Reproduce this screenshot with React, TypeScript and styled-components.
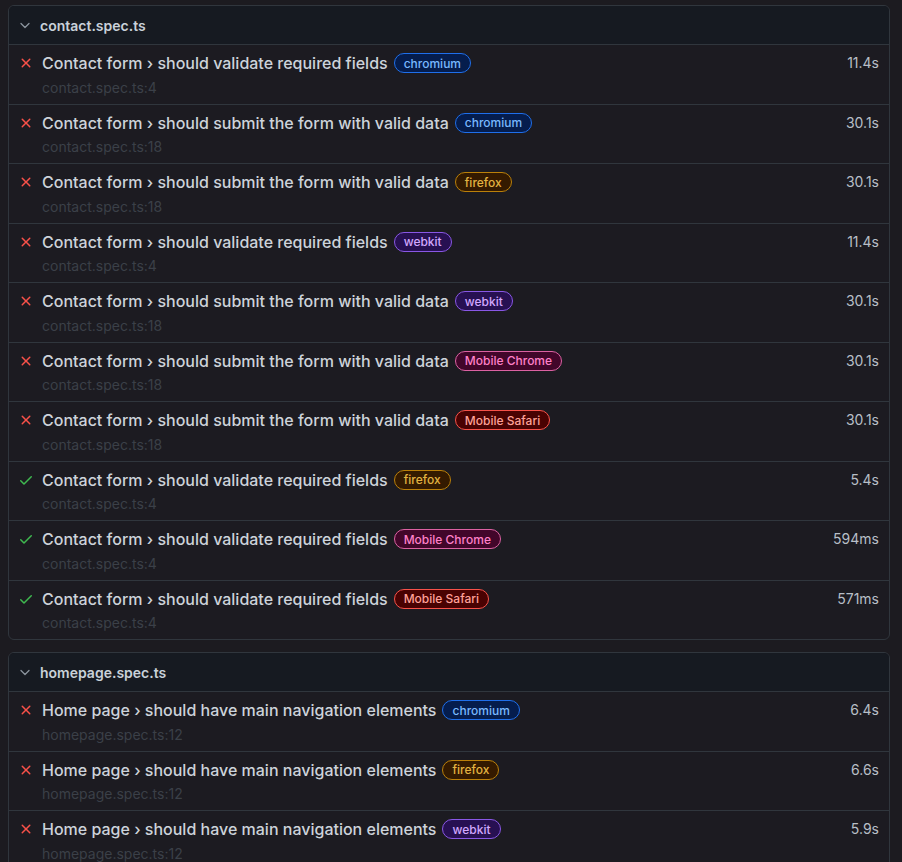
import React from "react";
import styled, { createGlobalStyle } from "styled-components";

const Global = createGlobalStyle`
  html, body { margin: 0; padding: 0; background: #1c1b20; }
  body { font-family: Inter, "Noto Sans", "Liberation Sans", sans-serif; color: #c9d1d9; }
`;

const Page = styled.div`
  padding: 5px 12px 20px 8px;
  display: flex;
  flex-direction: column;
  gap: 12px;
`;

const Card = styled.section`
  border: 1px solid #30363d;
  border-radius: 6px;
  overflow: hidden;
  background: #1c1b21;
`;

const Header = styled.header`
  height: 38px;
  display: flex;
  align-items: center;
  gap: 7px;
  padding-left: 8px;
  background: #161a21;
  font-size: 14px;
  font-weight: 600;
  color: #c9d1d9;
`;

const Row = styled.div`
  display: flex;
  align-items: flex-start;
  padding: 6px 10px 6px 9px;
  border-top: 1px solid #30363d;
`;

const IconBox = styled.span`
  width: 16px;
  height: 24px;
  display: flex;
  align-items: center;
  justify-content: center;
  margin-right: 8px;
  flex: none;
`;

const Main = styled.div`
  flex: 1;
  min-width: 0;
`;

const TitleLine = styled.div`
  display: flex;
  align-items: center;
  height: 24px;
  font-size: 16px;
  font-weight: 500;
  color: #cdd3da;
  white-space: nowrap;
`;

const Location = styled.div`
  margin-top: 2.5px;
  font-size: 14px;
  line-height: 20px;
  color: #3b4048;
`;

const Duration = styled.div`
  font-size: 14px;
  line-height: 24px;
  color: #b8bfc7;
  flex: none;
`;

type Proj = "chromium" | "firefox" | "webkit" | "Mobile Chrome" | "Mobile Safari";

const chipColors: Record<Proj, { bg: string; border: string; fg: string }> = {
  chromium: { bg: "#051d4d", border: "#1f6feb", fg: "#79b8ff" },
  firefox: { bg: "#341a00", border: "#bb8009", fg: "#e3b341" },
  webkit: { bg: "#271052", border: "#8957e5", fg: "#d2a8ff" },
  "Mobile Chrome": { bg: "#42062a", border: "#db61a2", fg: "#ff80c8" },
  "Mobile Safari": { bg: "#490202", border: "#f85149", fg: "#ffa198" },
};

const Chip = styled.span<{ $p: Proj }>`
  margin-left: 6px;
  display: inline-flex;
  align-items: center;
  height: 18px;
  padding: 0 9px;
  border-radius: 10px;
  font-size: 12px;
  font-weight: 500;
  background: ${(p) => chipColors[p.$p].bg};
  border: 1px solid ${(p) => chipColors[p.$p].border};
  color: ${(p) => chipColors[p.$p].fg};
`;

const Chevron = () => (
  <svg width="16" height="16" viewBox="0 0 16 16" fill="none" stroke="#8b949e" strokeWidth="1.3" strokeLinecap="round" strokeLinejoin="round">
    <path d="M4 6.5 8 10.5 12 6.5" />
  </svg>
);

const Cross = () => (
  <svg width="16" height="16" viewBox="0 0 16 16" fill="#f85149">
    <path d="M3.72 3.72a.75.75 0 0 1 1.06 0L8 6.94l3.22-3.22a.749.749 0 0 1 1.275.326.749.749 0 0 1-.215.734L9.06 8l3.22 3.22a.749.749 0 0 1-.326 1.275.749.749 0 0 1-.734-.215L8 9.06l-3.220 3.22a.751.751 0 0 1-1.042-.018.751.751 0 0 1-.018-1.042L6.94 8 3.72 4.78a.75.75 0 0 1 0-1.060Z" />
  </svg>
);

const Check = () => (
  <svg width="16" height="16" viewBox="0 0 16 16" fill="#3fb950">
    <path d="M13.78 4.22a.75.75 0 0 1 0 1.06l-7.25 7.25a.75.75 0 0 1-1.06 0L2.22 9.28a.751.751 0 0 1 .018-1.042.751.751 0 0 1 1.042-.018L6 10.94l6.72-6.72a.75.75 0 0 1 1.06 0Z" />
  </svg>
);

type Test = { ok: boolean; title: string; proj: Proj; loc: string; dur: string };

const contact: Test[] = [
  { ok: false, title: "Contact form › should validate required fields", proj: "chromium", loc: "contact.spec.ts:4", dur: "11.4s" },
  { ok: false, title: "Contact form › should submit the form with valid data", proj: "chromium", loc: "contact.spec.ts:18", dur: "30.1s" },
  { ok: false, title: "Contact form › should submit the form with valid data", proj: "firefox", loc: "contact.spec.ts:18", dur: "30.1s" },
  { ok: false, title: "Contact form › should validate required fields", proj: "webkit", loc: "contact.spec.ts:4", dur: "11.4s" },
  { ok: false, title: "Contact form › should submit the form with valid data", proj: "webkit", loc: "contact.spec.ts:18", dur: "30.1s" },
  { ok: false, title: "Contact form › should submit the form with valid data", proj: "Mobile Chrome", loc: "contact.spec.ts:18", dur: "30.1s" },
  { ok: false, title: "Contact form › should submit the form with valid data", proj: "Mobile Safari", loc: "contact.spec.ts:18", dur: "30.1s" },
  { ok: true, title: "Contact form › should validate required fields", proj: "firefox", loc: "contact.spec.ts:4", dur: "5.4s" },
  { ok: true, title: "Contact form › should validate required fields", proj: "Mobile Chrome", loc: "contact.spec.ts:4", dur: "594ms" },
  { ok: true, title: "Contact form › should validate required fields", proj: "Mobile Safari", loc: "contact.spec.ts:4", dur: "571ms" },
];

const home: Test[] = [
  { ok: false, title: "Home page › should have main navigation elements", proj: "chromium", loc: "homepage.spec.ts:12", dur: "6.4s" },
  { ok: false, title: "Home page › should have main navigation elements", proj: "firefox", loc: "homepage.spec.ts:12", dur: "6.6s" },
  { ok: false, title: "Home page › should have main navigation elements", proj: "webkit", loc: "homepage.spec.ts:12", dur: "5.9s" },
];

const FileCard = ({ name, tests }: { name: string; tests: Test[] }) => (
  <Card>
    <Header>
      <Chevron />
      {name}
    </Header>
    {tests.map((t, i) => (
      <Row key={i}>
        <IconBox>{t.ok ? <Check /> : <Cross />}</IconBox>
        <Main>
          <TitleLine>
            {t.title}
            <Chip $p={t.proj}>{t.proj}</Chip>
          </TitleLine>
          <Location>{t.loc}</Location>
        </Main>
        <Duration>{t.dur}</Duration>
      </Row>
    ))}
  </Card>
);

export default function App() {
  return (
    <>
      <Global />
      <Page>
        <FileCard name="contact.spec.ts" tests={contact} />
        <FileCard name="homepage.spec.ts" tests={home} />
      </Page>
    </>
  );
}
